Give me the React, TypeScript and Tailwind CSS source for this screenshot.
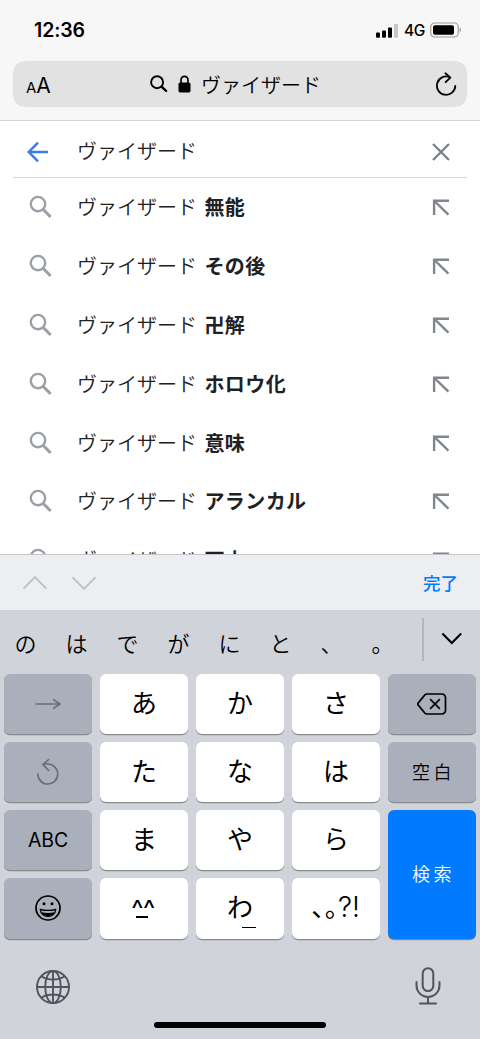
import type { ReactNode } from 'react';
import clsx from 'clsx';

const QUERY = 'ヴァイザード';

const suggestions = [
  '無能',
  'その後',
  '卍解',
  'ホロウ化',
  '意味',
  'アランカル',
  '死亡',
];

const candidates = ['の', 'は', 'で', 'が', 'に', 'と', '、', '。'];

const StatusBar = () => (
  <div className="flex h-[61px] items-center justify-between pl-[34px] pr-[18px]">
    <p className="pb-0.5 font-['Inter'] text-[19.5px] font-semibold leading-6 tracking-[-0.1px] text-black">
      12:36
    </p>
    <div className="flex items-center">
      <svg width="22" height="14" viewBox="0 0 22 14">
        <rect x="0" y="8.6" width="4" height="5.2" rx="1" />
        <rect x="6" y="6.4" width="4" height="7.4" rx="1" />
        <rect x="12" y="3.4" width="4" height="10.4" rx="1" />
        <rect x="18" y="0" width="4" height="13.8" rx="1" fill="#c6c6c6" />
      </svg>
      <span className="ml-1.5 w-[26px] font-['Inter'] text-[15.5px] font-medium leading-4 tracking-[-0.5px] text-black">
        4G
      </span>
      <svg className="-mt-0.5" width="32" height="16" viewBox="0 0 32 16">
        <rect x="0.7" y="1" width="27.6" height="14" rx="4" fill="none" stroke="#9b9b9b" strokeWidth="1.2" />
        <rect x="3" y="3.2" width="21" height="9.6" rx="2" />
        <path d="M29.7 5.6c1.8.9 1.8 3.9 0 4.8z" fill="#9b9b9b" />
      </svg>
    </div>
  </div>
);

const AddressBar = () => (
  <div className="mx-[13px] flex h-[46px] items-center rounded-xl bg-[#e2e2e3] text-black">
    <div className="flex w-[137px] items-baseline pl-[13px] pt-0.5 font-['Inter'] leading-none">
      <span className="text-[15px]">A</span>
      <span className="text-[21px]">A</span>
    </div>
    <svg width="18" height="18" viewBox="0 0 18 18" fill="none" stroke="black">
      <circle cx="7.1" cy="7.2" r="6" strokeWidth="1.9" />
      <path d="M11.5 11.7l4.6 4.2" strokeWidth="2.4" strokeLinecap="round" />
    </svg>
    <svg className="ml-2.5" width="13" height="18" viewBox="0 0 13 18">
      <rect x="0.5" y="7.6" width="12" height="9.8" rx="1.6" />
      <path d="M3 8.4V5.2a3.5 3.9 0 0 1 7 0v3.2" fill="none" stroke="black" strokeWidth="1.7" />
    </svg>
    <span className="ml-2.5 pt-px text-[20px] font-[350] leading-6">{QUERY}</span>
    <svg className="ml-auto mr-2.5" width="22" height="24" viewBox="0 0 22 24" fill="none" stroke="black" strokeWidth="1.8" strokeLinecap="round" strokeLinejoin="round">
      <path d="M20.3 13.8A9.2 9.2 0 1 1 14.6 5.1" />
      <path d="M10.4 1.3l5 4.3-4.8 4.6" />
    </svg>
  </div>
);

const SearchRow = () => (
  <div className="mx-[13px] flex h-[57px] items-center border-b border-[#d8dae0] text-[#202124]">
    <svg className="ml-3.5 mt-1.5" width="22" height="22" viewBox="0 0 22 22" fill="none" stroke="#3d7be8" strokeWidth="2.5">
      <path d="M21 11H2.2M11 1.6L1.8 11l9.2 9.4" />
    </svg>
    <span className="ml-7 pt-1 text-[20px] font-[350] leading-6">{QUERY}</span>
    <svg className="ml-auto mr-4 mt-1.5" width="20" height="20" viewBox="0 0 20 20" fill="none" stroke="#7b8187" strokeWidth="2.3">
      <path d="M2 2l16 16M18 2L2 18" />
    </svg>
  </div>
);

const SuggestionRow = ({ word }: { word: string }) => (
  <div className="flex h-[58.8px] shrink-0 items-center pl-[29px] pr-[30px] text-[#202124]">
    <svg width="24" height="24" viewBox="0 0 24 24" fill="none" stroke="#9aa0a6">
      <circle cx="9" cy="9.1" r="7.2" strokeWidth="2.4" />
      <path d="M14 14.3l7.6 7.6" strokeWidth="3" />
    </svg>
    <p className="ml-6 whitespace-pre text-[20px] font-[350] leading-6">
      {QUERY} <b className="ml-[3px] font-bold tracking-[0.4px]">{word}</b>
    </p>
    <svg className="ml-auto" width="18" height="18" viewBox="0 0 18 18" fill="none" stroke="#80868b" strokeWidth="2.4">
      <path d="M2.1 17V2.7H17M2.4 3l14 13.7" />
    </svg>
  </div>
);

const FormToolbar = () => (
  <div className="flex h-[56px] shrink-0 items-center border-t border-[#c5c6ca] bg-[#edeef1] pl-[23px] pr-[22px]">
    <svg width="74" height="16" viewBox="0 0 74 16" fill="none" stroke="#bfc0c3" strokeWidth="1.9">
      <path d="M.6 13.6L12 2.2l11.4 11.4M49.6 2.4L61 13.8 72.4 2.4" />
    </svg>
    <span className="ml-auto text-[17.5px] font-medium leading-6 text-[#007aff]">
      完了
    </span>
  </div>
);

const CandidateBar = () => (
  <div className="flex h-[64px] shrink-0 items-center text-black">
    <div className="flex">
      {candidates.map(c => (
        <span key={c} className="w-[51px] text-center text-[22px] font-[350] leading-8">
          {c}
        </span>
      ))}
    </div>
    <div className="-mt-1.5 ml-3.5 h-[43px] w-0.5 bg-[#b4b6bb]" />
    <svg className="-mt-1.5 ml-[17px]" width="22" height="14" viewBox="0 0 22 14" fill="none" stroke="black" strokeWidth="2.1">
      <path d="M1.4 1.6L10.8 11l9.4-9.4" />
    </svg>
  </div>
);

interface KeyProps {
  children: ReactNode;
  variant?: 'char' | 'func' | 'submit';
}

const Key = ({ children, variant = 'char' }: KeyProps) => (
  <div
    className={clsx(
      'flex items-center justify-center rounded-[6px] shadow-[0_1.3px_0_#888a8e]',
      variant === 'char' && 'bg-white text-[26px] text-black',
      variant === 'func' && 'bg-[#a9afbb] text-black',
      variant === 'submit' && 'row-span-2 bg-[#007aff] text-white',
    )}
  >
    {children}
  </div>
);

const Kana = ({ children }: { children: string }) => (
  <Key>
    <span className="pb-1 leading-8">{children}</span>
  </Key>
);

const Keyboard = () => (
  <div className="grid h-[264.5px] shrink-0 grid-cols-5 grid-rows-4 gap-2 px-1">
    <Key variant="func">
      <svg width="26" height="12" viewBox="0 0 26 12" fill="none" stroke="#6b6f77" strokeWidth="1.6" strokeLinecap="round" strokeLinejoin="round">
        <path d="M1 6h24M18.6 1.6L25 6l-6.4 4.4" />
      </svg>
    </Key>
    <Kana>あ</Kana>
    <Kana>か</Kana>
    <Kana>さ</Kana>
    <Key variant="func">
      <svg width="30" height="22" viewBox="0 0 30 22" fill="none" stroke="black" strokeWidth="1.7" strokeLinecap="round" strokeLinejoin="round">
        <path d="M10 1h15a3.5 3.5 0 0 1 3.5 3.5v13A3.5 3.5 0 0 1 25 21H10a3 3 0 0 1-2.2-1L1.5 12.4a2 2 0 0 1 0-2.8L7.8 2A3 3 0 0 1 10 1z" />
        <path d="M13.6 6.6l8.8 8.8M22.4 6.6l-8.8 8.8" />
      </svg>
    </Key>

    <Key variant="func">
      <svg width="24" height="28" viewBox="0 0 24 28" fill="none" stroke="#6b6f77" strokeWidth="1.7" strokeLinecap="round" strokeLinejoin="round">
        <path d="M1.8 16A10 10 0 1 0 12 6H7M12.6 1.5L7 6.7l5.6 5.6" />
      </svg>
    </Key>
    <Kana>た</Kana>
    <Kana>な</Kana>
    <Kana>は</Kana>
    <Key variant="func">
      <span className="pb-0.5 pl-[3px] text-[18px] font-[350] leading-6 tracking-[3.5px]">空白</span>
    </Key>

    <Key variant="func">
      <span className="font-['Inter'] text-[19.5px] leading-6 tracking-[-0.2px]">ABC</span>
    </Key>
    <Kana>ま</Kana>
    <Kana>や</Kana>
    <Kana>ら</Kana>
    <Key variant="submit">
      <span className="pb-0.5 pl-[3px] text-[18px] font-[350] leading-6 tracking-[3.5px]">検索</span>
    </Key>

    <Key variant="func">
      <svg width="26" height="26" viewBox="0 0 26 26" fill="none" stroke="black" strokeWidth="1.7">
        <circle cx="13" cy="13" r="12" />
        <circle cx="9" cy="8.8" r="1.5" fill="black" stroke="none" />
        <circle cx="17" cy="8.8" r="1.5" fill="black" stroke="none" />
        <path d="M5.3 14.5c4.8 1.2 10.6 1.2 15.4 0-.4 4.3-3.7 6.9-7.7 6.9s-7.3-2.6-7.7-6.9z" strokeWidth="1.3" />
        <path d="M6.2 17.2c4.3.9 9.3.9 13.6 0-1.2 2.8-3.7 4.2-6.8 4.2s-5.6-1.4-6.8-4.2z" fill="black" stroke="none" />
      </svg>
    </Key>
    <Key>
      <div className="mr-0.5 flex flex-col items-center font-['Inter']">
        <span className="h-[23px] text-[26px] leading-8 tracking-[-0.5px]">^^</span>
        <span className="mb-1.5 mr-0.5 h-0.5 w-3 bg-black" />
      </div>
    </Key>
    <Key>
      <span className="relative pb-1 leading-8">
        わ
        <span className="absolute -bottom-0.5 -right-[3px] h-[1.5px] w-3.5 bg-black" />
      </span>
    </Key>
    <Key>
      <span className="flex items-baseline pb-1 leading-8">
        <span className="w-[13px]">､</span>
        <span className="w-[13px]">｡</span>
        <span className="font-['Inter'] text-[28px] font-light">?!</span>
      </span>
    </Key>
  </div>
);

const BottomBar = () => (
  <div className="flex flex-col">
    <div className="flex items-center justify-between pl-9 pr-[39px] pt-7">
      <svg className="mt-0.5" width="34" height="34" viewBox="0 0 34 34" fill="none" stroke="#50545c" strokeWidth="1.9">
        <circle cx="17" cy="17" r="16" />
        <ellipse cx="17" cy="17" rx="7.8" ry="16" />
        <path d="M17 1v32M1 17h32M5.2 6.2c6.5 4.4 17.1 4.4 23.6 0M5.2 27.8c6.5-4.4 17.1-4.4 23.6 0" />
      </svg>
      <svg width="26" height="38" viewBox="0 0 26 38" fill="none" stroke="#50545c" strokeWidth="2" strokeLinecap="round">
        <rect x="7.7" y="1.2" width="10.6" height="22.8" rx="5.3" />
        <path d="M1.5 15v3.5a11.5 11.5 0 0 0 23 0V15M13 30v6.5M5 36.5h16" />
      </svg>
    </div>
    <div className="mx-auto mt-[17px] h-1.5 w-[172px] rounded-full bg-black" />
  </div>
);

const App = () => {
  return (
    <div className="flex h-[1039px] w-[480px] flex-col overflow-hidden bg-white font-['Noto_Sans_CJK_JP',sans-serif]">
      <div className="h-[121px] shrink-0 border-b border-[#d2d2d3] bg-[#f7f7f7]">
        <StatusBar />
        <AddressBar />
      </div>

      <div className="h-[433px] shrink-0 overflow-hidden">
        <SearchRow />
        <div className="flex flex-col">
          {suggestions.map(word => (
            <SuggestionRow key={word} word={word} />
          ))}
        </div>
      </div>

      <FormToolbar />

      <div className="flex flex-1 flex-col bg-[#d0d3da]">
        <CandidateBar />
        <Keyboard />
        <BottomBar />
      </div>
    </div>
  );
};

export default App;
